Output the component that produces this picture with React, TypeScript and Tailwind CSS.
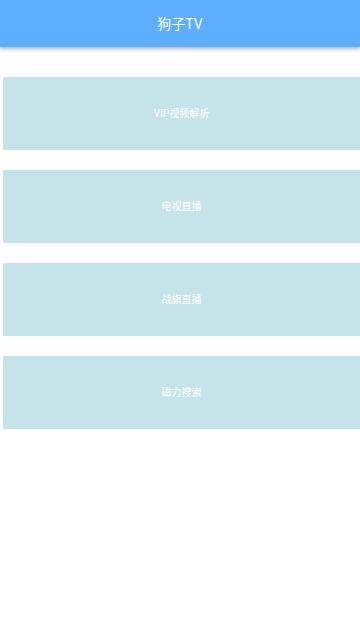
import React from "react";

const items = ["VIP视频解析", "电视直播", "战旗直播", "磁力搜索"];

export default function App() {
  return (
    <div
      className="w-[360px] h-[641px] bg-white overflow-hidden"
      style={{ fontFamily: '"Roboto", "Noto Sans CJK SC", sans-serif' }}
    >
      <div className="h-[47px] bg-[#5eaefe] flex items-center justify-center shadow-[0_2px_4px_rgba(0,0,0,0.3)] relative z-10">
        <span className="text-white text-[14px] leading-none">狗子TV</span>
      </div>
      <div className="flex flex-col gap-[20px] pt-[30px] pl-[3px]">
        {items.map((t) => (
          <div
            key={t}
            className="h-[73px] bg-[#c5e4ea] flex items-center justify-center"
          >
            <span className="text-white text-[10px] leading-none">{t}</span>
          </div>
        ))}
      </div>
    </div>
  );
}
